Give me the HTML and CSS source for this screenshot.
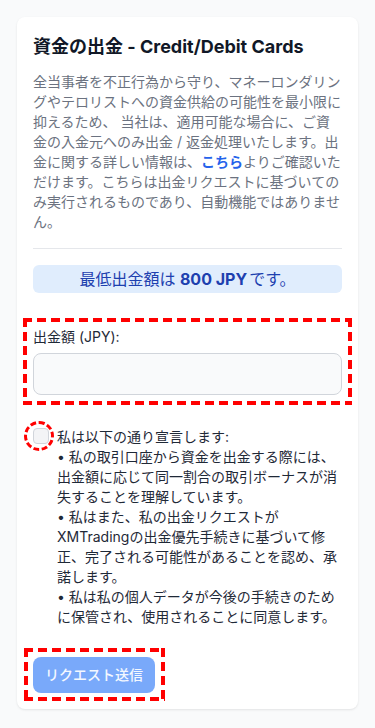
FILE: index.html
```html
<!DOCTYPE html>
<html lang="ja">
<head>
<meta charset="utf-8">
<meta name="viewport" content="width=device-width, initial-scale=1">
<title>資金の出金</title>
<link rel="stylesheet" href="styles.css">
</head>
<body>
<div class="card">
  <h1 class="title">資金の出金 - Credit/Debit Cards</h1>
  <p class="intro">全当事者を不正行為から守り、マネーロンダリングやテロリストへの資金供給の可能性を最小限に抑えるため、 当社は、適用可能な場合に、ご資金の入金元へのみ出金 / 返金処理いたします。出金に関する詳しい情報は、<a class="link" href="#">こちら</a>よりご確認いただけます。こちらは出金リクエストに基づいてのみ実行されるものであり、自動機能ではありません。</p>
  <hr class="divider">
  <div class="notice">最低出金額は <strong>800 JPY</strong>です。</div>
  <div class="field marked">
    <label class="label" for="amount">出金額 (JPY):</label>
    <input class="input" id="amount" type="text">
  </div>
  <div class="declare">
    <span class="check-wrap"><input class="check" type="checkbox"></span>
    <div class="declare-text">私は以下の通り宣言します:<br>• 私の取引口座から資金を出金する際には、出金額に応じて同一割合の取引ボーナスが消失することを理解しています。<br>• 私はまた、私の出金リクエストがXMTradingの出金優先手続きに基づいて修正、完了される可能性があることを認め、承諾します。<br>• 私は私の個人データが今後の手続きのために保管され、使用されることに同意します。</div>
  </div>
  <div class="actions">
    <span class="btn-wrap"><button class="btn" type="button">リクエスト送信</button></span>
  </div>
</div>
</body>
</html>
```

FILE: styles.css
```css
* { box-sizing: border-box; }
html, body { margin: 0; }
body {
  background: #f9fafb;
  padding: 17px 17px 16px 17px;
  font-family: Inter, "Noto Sans CJK JP", sans-serif;
  color: #1f2937;
}
.card {
  background: #ffffff;
  border-radius: 8px;
  box-shadow: 0 1px 3px rgba(0,0,0,0.06), 0 1px 2px rgba(0,0,0,0.04);
  padding: 16px;
}
.title {
  margin: 0;
  font-size: 18px;
  line-height: 28px;
  font-weight: 700;
  color: #111827;
}
.intro {
  margin: 11px 0 0 0;
  font-size: 14px;
  line-height: 20px;
  color: #6b7280;
}
.link {
  color: #2563eb;
  font-weight: 600;
  text-decoration: none;
}
.divider {
  border: 0;
  border-top: 1px solid #e5e7eb;
  margin: 16px 0 0 0;
  height: 0;
}
.notice {
  margin-top: 16px;
  background: #e0edfd;
  border-radius: 6px;
  padding: 2px 0;
  text-align: center;
  font-size: 16px;
  line-height: 24px;
  color: #1e40af;
}
.notice strong { font-weight: 700; margin-right: 2px; }
.marked { position: relative; }
.field {
  margin-top: 34px;
  display: flex;
  flex-direction: column;
}
.field::after,
.btn-wrap::after {
  content: "";
  position: absolute;
  pointer-events: none;
  background:
    repeating-linear-gradient(90deg, #ff0000 0 9px, transparent 9px 14px) left top / 100% 4px no-repeat,
    repeating-linear-gradient(90deg, #ff0000 0 9px, transparent 9px 14px) left bottom / 100% 4px no-repeat,
    repeating-linear-gradient(180deg, #ff0000 0 9px, transparent 9px 14px) left top / 4px 100% no-repeat,
    repeating-linear-gradient(180deg, #ff0000 0 9px, transparent 9px 14px) right top / 4px 100% no-repeat;
}
.field::after {
  top: -9px; bottom: -10px; left: -10px; right: -10px;
}
.label {
  font-size: 14px;
  line-height: 20px;
  color: #1f2937;
  margin-bottom: 6px;
}
.input {
  height: 42px;
  width: 100%;
  border: 1px solid #d1d5db;
  border-radius: 8px;
  background: #f9fafb;
  font: inherit;
  padding: 0 12px;
}
.declare {
  margin-top: 32px;
  display: flex;
  align-items: flex-start;
  gap: 8px;
}
.check-wrap {
  position: relative;
  display: block;
  width: 16px;
  height: 16px;
  margin-top: 1px;
  flex: 0 0 auto;
}
.check-wrap::after {
  content: "";
  position: absolute;
  top: -7px; bottom: -7px; left: -9px; right: -5px;
  border: 3px dashed #ff0000;
  border-radius: 50%;
  pointer-events: none;
}
.check {
  -webkit-appearance: none;
  appearance: none;
  margin: 0;
  display: block;
  width: 16px;
  height: 16px;
  border: 1px solid #d1d5db;
  border-radius: 4px;
  background: #f3f4f6;
}
.declare-text {
  width: 284px;
  font-size: 14px;
  line-height: 20px;
  color: #1f2937;
}
.actions {
  margin-top: 30px;
  display: flex;
}
.btn-wrap {
  position: relative;
  display: block;
}
.btn-wrap::after {
  top: -9px; bottom: -8px; left: -9px; right: -10px;
}
.btn {
  display: block;
  height: 36px;
  padding: 0 12px;
  border: 0;
  border-radius: 8px;
  background: #79a9fa;
  color: #f4f8ff;
  font-family: Inter, "Noto Sans CJK JP", sans-serif;
  font-size: 14px;
  font-weight: 500;
  line-height: 36px;
}
```
